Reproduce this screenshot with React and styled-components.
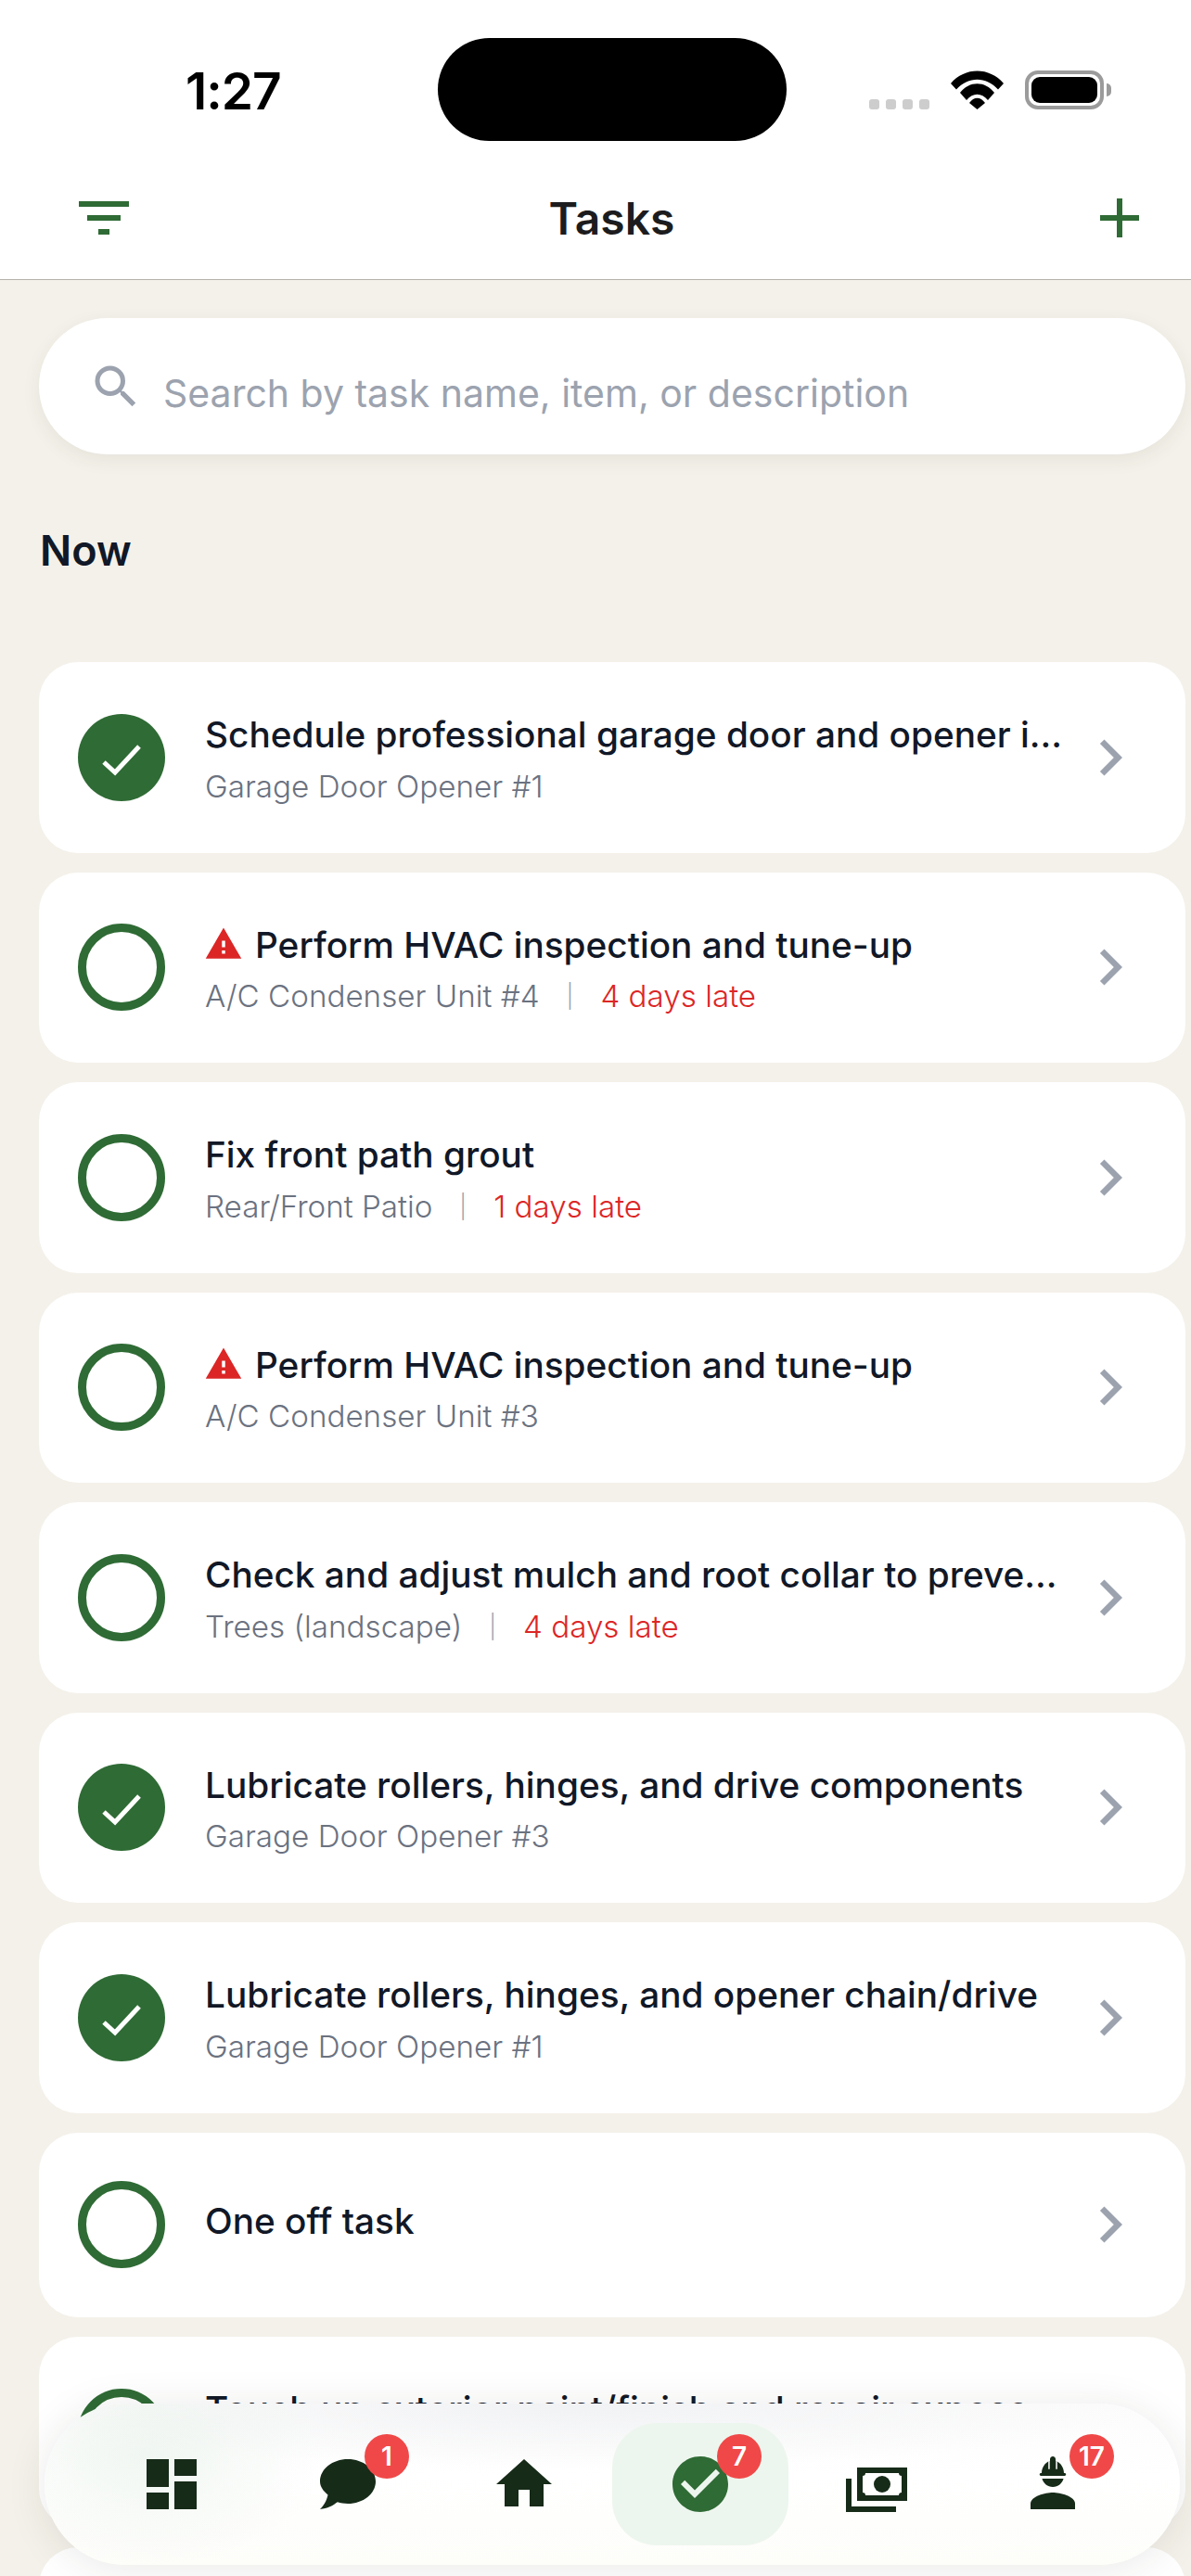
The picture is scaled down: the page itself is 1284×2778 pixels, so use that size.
import styled, { createGlobalStyle } from "styled-components";
import {
  MdAdd,
  MdCheckCircle,
  MdChevronRight,
  MdDashboard,
  MdFilterList,
  MdHome,
  MdSearch,
  MdWarning,
} from "react-icons/md";

const GlobalStyle = createGlobalStyle`
  html, body {
    margin: 0;
    padding: 0;
    background: #f4f1ea;
  }
  * {
    box-sizing: border-box;
  }
`;

const Page = styled.div`
  position: relative;
  width: 1284px;
  height: 2778px;
  overflow: hidden;
  background: #f4f1ea;
  font-family: Inter, "Liberation Sans", sans-serif;
`;

const Top = styled.header`
  background: #fff;
  height: 302px;
  border-bottom: 1px solid #b4b1a9;
`;

const StatusBar = styled.div`
  display: flex;
  align-items: center;
  padding: 41px 0 0 200px;
  margin-bottom: 47px;
`;

const Time = styled.div`
  width: 272px;
  padding-top: 2px;
  font-size: 55px;
  font-weight: 600;
  letter-spacing: -1px;
  color: #000;
`;

const Island = styled.div`
  width: 376px;
  height: 111px;
  border-radius: 56px;
  background: #000;
`;

const StatusIcons = styled.div`
  display: flex;
  align-items: flex-end;
  gap: 23px;
  margin-left: 89px;
  height: 42px;
`;

const Signal = styled.div`
  display: flex;
  gap: 7px;
`;

const SignalDot = styled.span`
  width: 11px;
  height: 11px;
  border-radius: 3px;
  background: #cdcdcd;
`;

const Battery = styled.div`
  position: relative;
  width: 85px;
  height: 42px;
  border: 4px solid #9b9b9b;
  border-radius: 14px;
  padding: 3px;
  margin-right: 8px;
  &::after {
    content: "";
    position: absolute;
    right: -12px;
    top: 10px;
    width: 5px;
    height: 14px;
    border-radius: 0 5px 5px 0;
    background: #9b9b9b;
  }
`;

const BatteryFill = styled.div`
  height: 100%;
  border-radius: 9px;
  background: #000;
`;

const NavRow = styled.div`
  display: flex;
  align-items: center;
  justify-content: space-between;
  padding: 0 41px 0 76px;
  color: #2f6b35;
`;

const NavTitle = styled.h1`
  margin: 0;
  font-size: 48px;
  font-weight: 600;
  color: #1c1c1e;
`;

const Content = styled.main`
  padding: 41px 6px 0 42px;
`;

const Search = styled.div`
  display: flex;
  align-items: center;
  height: 147px;
  padding-left: 53px;
  border-radius: 74px;
  background: #fff;
  box-shadow: 0 6px 20px rgba(60, 55, 40, 0.07);
  color: #9ca3af;
`;

const SearchText = styled.span`
  margin: 14px 0 0 21px;
  font-size: 41px;
  color: #9ca3af;
`;

const SectionTitle = styled.h2`
  margin: 77px 0 93px 1px;
  font-size: 45px;
  line-height: 54px;
  font-weight: 600;
  color: #111827;
`;

const TaskList = styled.div`
  display: flex;
  flex-direction: column;
  gap: 21px;
`;

const Card = styled.div`
  display: flex;
  align-items: center;
  flex-shrink: 0;
  height: ${(props) => (props.$short ? "199.5px" : "205.5px")};
  padding: 0 42px;
  border-radius: 42px;
  background: #fff;
`;

const Ring = styled.div`
  flex-shrink: 0;
  width: 94px;
  height: 94px;
  border-radius: 50%;
  border: 9px solid #2f6b35;
`;

const Done = styled.div`
  flex-shrink: 0;
  width: 94px;
  height: 94px;
  border-radius: 50%;
  background: #2f6b35;
`;

const TaskText = styled.div`
  flex: 1;
  min-width: 0;
  margin-left: 43px;
  padding-right: 6px;
`;

const TitleRow = styled.div`
  display: flex;
  align-items: center;
  height: 56px;
  margin: ${(props) => (props.$short ? "0 0 10px" : "3px 0 0")};
  color: #dc2626;
`;

const TaskTitle = styled.div`
  flex: 1;
  min-width: 0;
  white-space: nowrap;
  overflow: hidden;
  text-overflow: ellipsis;
  font-size: 38.75px;
  font-weight: 500;
  color: #111827;
`;

const WarnIcon = styled(MdWarning)`
  flex-shrink: 0;
  margin: -1px 13px 0 -1px;
`;

const SubRow = styled.div`
  display: flex;
  align-items: center;
  height: 50px;
  margin-top: 3px;
  font-size: 33.2px;
  font-weight: 300;
  color: #6b7280;
`;

const Divider = styled.span`
  margin: 0 29px;
  font-size: 25px;
  color: #9ca3af;
`;

const Late = styled.span`
  color: #dc2626;
`;

const Chevron = styled(MdChevronRight)`
  flex-shrink: 0;
  color: #9ca3af;
`;

const TabBar = styled.nav`
  position: absolute;
  left: 48px;
  top: 2592px;
  display: flex;
  align-items: center;
  width: 1224px;
  height: 174px;
  padding: 0 42px;
  border-radius: 87px;
  background:
    radial-gradient(ellipse 190px 120px at 110px 55px, rgba(226, 238, 228, 0.5), transparent),
    radial-gradient(ellipse 620px 70px at 575px 0, #f1f2f4, transparent),
    linear-gradient(#fcfcfc 0, #fff 45%, #fdfdfa 100%);
  box-shadow: 0 4px 44px rgba(40, 40, 30, 0.1);
`;

const Tab = styled.div`
  position: relative;
  display: flex;
  align-items: center;
  justify-content: center;
  flex: 1;
  height: 132px;
  border-radius: 48px;
  color: #162b18;
  background: ${(props) => (props.$active ? "#edf6ee" : "transparent")};
`;

const Badge = styled.span`
  position: absolute;
  top: 12px;
  right: 29px;
  min-width: 48px;
  height: 48px;
  padding: 0 8px;
  border-radius: 24px;
  background: #f04848;
  color: #fff;
  font-size: 28px;
  font-weight: 600;
  line-height: 48px;
  text-align: center;
`;

function WifiIcon() {
  return (
    <svg width="57" height="42" viewBox="0 0 57 42">
      <path d="M0 14C15-4 42-4 57 14L51 20.5C38 6 19 6 6 20.5Z" />
      <path d="M10 24C20 11 37 11 47 24L40 32C33 23.5 24 23.5 17 32Z" />
      <path d="M20 35C25 28 32 28 37 35L28.5 42Z" />
    </svg>
  );
}

function CheckMark() {
  return (
    <svg width="94" height="94" viewBox="0 0 94 94">
      <polyline points="28,52 40,63 66,35" fill="none" stroke="#fff" strokeWidth="5" />
    </svg>
  );
}

function ChatIcon() {
  return (
    <svg width="72" height="72" viewBox="-6 -9 72 72" fill="currentColor">
      <path d="M30 0C46.6 0 60 10.7 60 24s-13.4 24-30 24c-4 0-7.8-.6-11.2-1.7C14 50 8 53.4 0 54c3.4-3.3 7-8.4 8.5-15.6C3.2 34.2 0 29.3 0 24 0 10.7 13.4 0 30 0Z" />
    </svg>
  );
}

function BillsIcon() {
  return (
    <svg width="72" height="72" viewBox="0 0 24 24" fill="currentColor">
      <path
        fillRule="evenodd"
        d="M5 6h18v12H5zM8 8H20a1 1 0 0 0 1 1V15a1 1 0 0 0-1 1H8a1 1 0 0 0-1-1V9a1 1 0 0 0 1-1Z"
      />
      <circle cx="14" cy="12" r="3" />
      <path d="M1 10h2v10h16v2H1z" />
    </svg>
  );
}

function WorkerIcon() {
  return (
    <svg width="72" height="72" viewBox="-3 0 24 24" fill="currentColor">
      <path d="M9 15c-2.67 0-8 1.34-8 4v2h16v-2c0-2.66-5.33-4-8-4z" />
      <path d="M9 13c1.86 0 3.41-1.28 3.86-3H5.14C5.59 11.72 7.14 13 9 13z" />
      <path d="M4.74 9h8.51c.27 0 .49-.22.49-.49v-.02c0-.27-.22-.49-.49-.49H13c0-2.5-1.9-4.6-4-4.6S5 5.5 5 8h-.26c-.27 0-.49.22-.49.49v.03c0 .26.22.48.49.48z" />
      <path d="M7.4 3h.5v3.6h-.5zM10.1 3h.5v3.6h-.5z" fill="#fff" />
      <path d="M8 3c0-.55.45-1 1-1s1 .45 1 1v3.2c0 .2-.1.3-.3.3H8.3c-.2 0-.3-.1-.3-.3z" />
    </svg>
  );
}

const tasks = [
  { title: "Schedule professional garage door and opener inspection", item: "Garage Door Opener #1", done: true },
  { title: "Perform HVAC inspection and tune-up", item: "A/C Condenser Unit #4", late: "4 days late", warn: true },
  { title: "Fix front path grout", item: "Rear/Front Patio", late: "1 days late" },
  { title: "Perform HVAC inspection and tune-up", item: "A/C Condenser Unit #3", warn: true },
  { title: "Check and adjust mulch and root collar to prevent rot", item: "Trees (landscape)", late: "4 days late" },
  { title: "Lubricate rollers, hinges, and drive components", item: "Garage Door Opener #3", done: true },
  { title: "Lubricate rollers, hinges, and opener chain/drive", item: "Garage Door Opener #1", done: true },
  { title: "One off task", short: true },
  { title: "Touch up exterior paint/finish and repair exposed areas", item: "\u00a0" },
  { title: "", item: "\u00a0" },
];

function TaskCard({ task }) {
  return (
    <Card $short={task.short}>
      {task.done ? (
        <Done>
          <CheckMark />
        </Done>
      ) : (
        <Ring />
      )}
      <TaskText>
        <TitleRow $short={task.short}>
          {task.warn && <WarnIcon size={42} />}
          <TaskTitle>{task.title}</TaskTitle>
        </TitleRow>
        {task.item && (
          <SubRow>
            {task.item}
            {task.late && (
              <>
                <Divider>|</Divider>
                <Late>{task.late}</Late>
              </>
            )}
          </SubRow>
        )}
      </TaskText>
      <Chevron size={78} />
    </Card>
  );
}

function App() {
  return (
    <Page>
      <GlobalStyle />
      <Top>
        <StatusBar>
          <Time>1:27</Time>
          <Island />
          <StatusIcons>
            <Signal>
              <SignalDot />
              <SignalDot />
              <SignalDot />
              <SignalDot />
            </Signal>
            <WifiIcon />
            <Battery>
              <BatteryFill />
            </Battery>
          </StatusIcons>
        </StatusBar>
        <NavRow>
          <MdFilterList size={72} />
          <NavTitle>Tasks</NavTitle>
          <MdAdd size={72} />
        </NavRow>
      </Top>
      <Content>
        <Search>
          <MdSearch size={60} />
          <SearchText>Search by task name, item, or description</SearchText>
        </Search>
        <SectionTitle>Now</SectionTitle>
        <TaskList>
          {tasks.map((task, i) => (
            <TaskCard key={i} task={task} />
          ))}
        </TaskList>
      </Content>
      <TabBar>
        <Tab>
          <MdDashboard size={72} />
        </Tab>
        <Tab>
          <ChatIcon />
          <Badge>1</Badge>
        </Tab>
        <Tab>
          <MdHome size={72} />
        </Tab>
        <Tab $active>
          <MdCheckCircle size={72} color="#2f6b35" />
          <Badge>7</Badge>
        </Tab>
        <Tab>
          <BillsIcon />
        </Tab>
        <Tab>
          <WorkerIcon />
          <Badge>17</Badge>
        </Tab>
      </TabBar>
    </Page>
  );
}

export default App;
